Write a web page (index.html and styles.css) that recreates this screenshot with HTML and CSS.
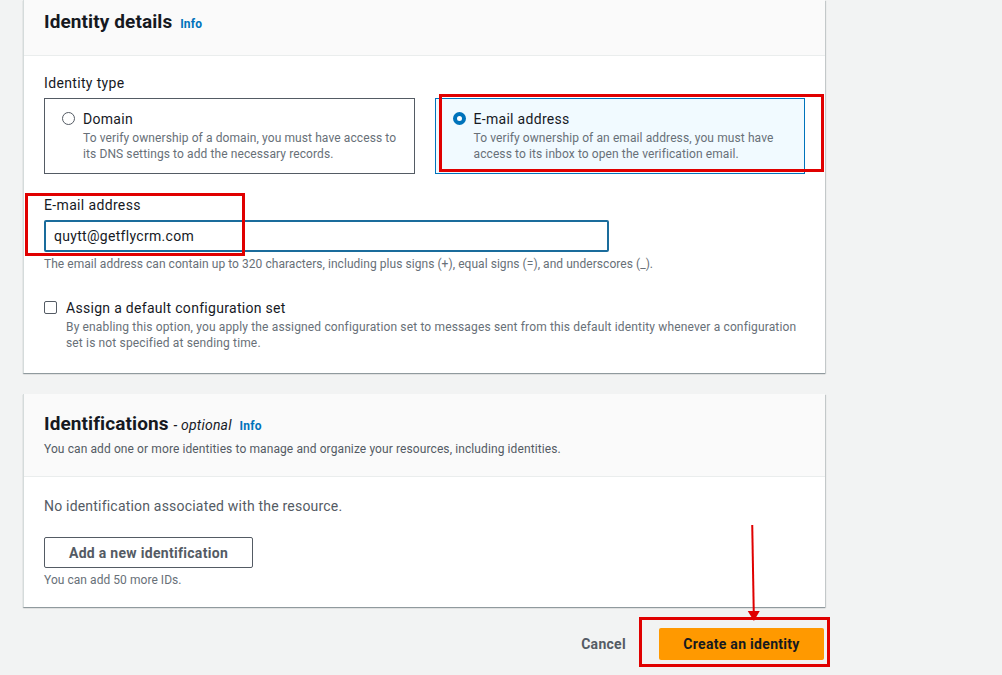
FILE: index.html
```html
<!DOCTYPE html>
<html lang="en">
<head>
    <meta charset="UTF-8">
    <title>Create identity</title>
    <link rel="stylesheet" href="styles.css">
</head>
<body>
    <div class="page">
        <div class="column">

            <div class="card">
                <div class="card-header">
                    <h2>Identity details <a class="info" href="#">Info</a></h2>
                </div>
                <div class="card-body">
                    <div class="field-label">Identity type</div>
                    <div class="tiles">
                        <label class="tile">
                            <span class="radio"></span>
                            <span class="tile-text">
                                <span class="tile-title">Domain</span>
                                <span class="tile-desc">To verify ownership of a domain, you must have access to its DNS settings to add the necessary records.</span>
                            </span>
                        </label>
                        <label class="tile selected">
                            <span class="radio checked"></span>
                            <span class="tile-text">
                                <span class="tile-title">E-mail address</span>
                                <span class="tile-desc">To verify ownership of an email address, you must have access to its inbox to open the verification email.</span>
                            </span>
                        </label>
                    </div>

                    <div class="field email-field">
                        <div class="field-label">E-mail address</div>
                        <input class="text-input" type="text" value="quytt@getflycrm.com">
                        <div class="hint">The email address can contain up to 320 characters, including plus signs (+), equal signs (=), and underscores (_).</div>
                    </div>

                    <div class="check-row">
                        <span class="checkbox"></span>
                        <div>
                            <div class="check-title">Assign a default configuration set</div>
                            <div class="check-desc">By enabling this option, you apply the assigned configuration set to messages sent from this default identity whenever a configuration set is not specified at sending time.</div>
                        </div>
                    </div>
                </div>
            </div>

            <div class="card second">
                <div class="card-header tall">
                    <h2>Identifications <i class="optional">- optional</i> <a class="info" href="#">Info</a></h2>
                    <p class="header-desc">You can add one or more identities to manage and organize your resources, including identities.</p>
                </div>
                <div class="card-body">
                    <p class="empty">No identification associated with the resource.</p>
                    <button class="btn-normal">Add a new identification</button>
                    <div class="hint small">You can add 50 more IDs.</div>
                </div>
            </div>

            <div class="actions">
                <button class="btn-link">Cancel</button>
                <button class="btn-primary">Create an identity</button>
            </div>
        </div>

        <!-- red annotations drawn over the screenshot -->
        <div class="mark mark-tile"></div>
        <div class="mark mark-email"></div>
        <div class="mark mark-create"></div>
        <div class="arrow"></div>
    </div>
</body>
</html>
```

FILE: styles.css
```css
body {
    margin: 0;
    background: #f2f3f3;
    font-family: Roboto, 'Liberation Sans', sans-serif;
    color: #16191f;
}
.page {
    position: relative;
    height: 675px;
    overflow: hidden;
}
.column {
    width: 802px;
    margin-left: 23px;
}
.card {
    background: #fff;
    border-left: 1px solid #d5dbdb;
    box-shadow: 0 1px 1px 0 rgba(0, 28, 36, 0.3), 1px 1px 1px 0 rgba(0, 28, 36, 0.15);
}
.card.second {
    margin-top: 21px;
}
.card-header {
    background: #fafafa;
    border-bottom: 1px solid #eaeded;
    height: 56px;
    box-sizing: border-box;
    padding: 10px 20px 0 20px;
}
.card-header.tall {
    height: 83px;
    padding-top: 18px;
}
.card-header h2 {
    margin: 0;
    font-size: 19px;
    font-weight: 700;
    line-height: 24px;
    letter-spacing: 0.1px;
}
.info {
    font-size: 12px;
    font-weight: 700;
    color: #0073bb;
    text-decoration: none;
    margin-left: 3px;
    letter-spacing: 0.2px;
}
.optional {
    font-size: 14px;
    font-weight: 400;
    color: #16191f;
    letter-spacing: 0.2px;
}
.header-desc {
    margin: 3px 0 0;
    font-size: 12px;
    line-height: 16px;
    color: #545b64;
    letter-spacing: 0.1px;
}
.card-body {
    padding: 18px 20px 0 20px;
}
.card:first-child .card-body {
    height: 317px;
    box-sizing: border-box;
}
.second .card-body {
    height: 130px;
    box-sizing: border-box;
    padding-top: 20px;
}
.field-label {
    font-size: 14px;
    line-height: 18px;
    margin-bottom: 6px;
    letter-spacing: 0.35px;
}
.tiles {
    display: flex;
    gap: 20px;
}
.tile {
    flex: 1;
    display: flex;
    gap: 8px;
    height: 76px;
    box-sizing: border-box;
    border: 1px solid #545b64;
    padding: 11px 17px;
}
.tile.selected {
    border-color: #0073bb;
    background: #f1faff;
}
.radio {
    flex: none;
    width: 11px;
    height: 11px;
    margin-top: 2px;
    border: 1.5px solid #545b64;
    border-radius: 50%;
    background: #fff;
}
.radio.checked {
    width: 5px;
    height: 5px;
    border: 4.5px solid #0073bb;
}
.tile-text {
    display: flex;
    flex-direction: column;
}
.tile-title {
    font-size: 14px;
    line-height: 18px;
    letter-spacing: 0.3px;
}
.tile-desc {
    font-size: 12px;
    line-height: 16px;
    color: #687078;
    margin-top: 2px;
    letter-spacing: 0.1px;
}
.email-field {
    margin-top: 22px;
}
.email-field .field-label {
    margin-bottom: 6px;
}
.text-input {
    display: block;
    width: 565px;
    height: 32px;
    box-sizing: border-box;
    border: 2px solid #1a6c9c;
    border-radius: 2px;
    padding: 0 8px;
    font-family: inherit;
    font-size: 14px;
    letter-spacing: 0.3px;
    color: #16191f;
    outline: none;
}
.hint {
    font-size: 12px;
    line-height: 16px;
    color: #687078;
    margin-top: 4px;
    letter-spacing: 0.05px;
}
.check-row {
    display: flex;
    gap: 9px;
    margin-top: 27px;
}
.checkbox {
    flex: none;
    width: 11px;
    height: 11px;
    margin-top: 2px;
    border: 1.5px solid #545b64;
    border-radius: 2px;
}
.check-title {
    font-size: 14px;
    line-height: 18px;
    letter-spacing: 0.3px;
}
.check-desc {
    font-size: 12px;
    line-height: 16px;
    color: #687078;
    margin-top: 2px;
    letter-spacing: 0.15px;
}
.empty {
    margin: 0;
    font-size: 14px;
    line-height: 18px;
    color: #545b64;
    letter-spacing: 0.2px;
}
.btn-normal {
    display: block;
    margin-top: 22px;
    width: 209px;
    height: 31px;
    background: #fff;
    border: 1px solid #545b64;
    border-radius: 2px;
    font-family: inherit;
    font-size: 14px;
    font-weight: 700;
    color: #545b64;
    letter-spacing: 0.3px;
}
.hint.small {
    margin-top: 4px;
}
.actions {
    display: flex;
    justify-content: flex-end;
    align-items: center;
    gap: 17px;
    margin-top: 21px;
    padding-right: 1px;
}
.btn-link {
    background: none;
    border: none;
    font-family: inherit;
    font-size: 14px;
    font-weight: 700;
    color: #545b64;
    padding: 0 16px;
    letter-spacing: 0.3px;
}
.btn-primary {
    width: 165px;
    height: 32px;
    background: #ff9900;
    border: none;
    border-radius: 2px;
    font-family: inherit;
    font-size: 14px;
    font-weight: 700;
    color: #16191f;
    letter-spacing: 0.3px;
}
.mark {
    position: absolute;
    border: 3px solid #e00000;
    box-sizing: border-box;
}
.mark-tile {
    left: 439px;
    top: 94px;
    width: 385px;
    height: 78px;
}
.mark-email {
    left: 25px;
    top: 193px;
    width: 220px;
    height: 63px;
}
.mark-create {
    left: 639px;
    top: 617px;
    width: 191px;
    height: 50px;
}
.arrow {
    position: absolute;
    left: 752px;
    top: 525px;
    width: 2px;
    height: 88px;
    background: #e00000;
    transform: rotate(-1deg);
}
.arrow::after {
    content: '';
    position: absolute;
    left: -5px;
    bottom: -8px;
    border-left: 6px solid transparent;
    border-right: 6px solid transparent;
    border-top: 10px solid #e00000;
}
```
